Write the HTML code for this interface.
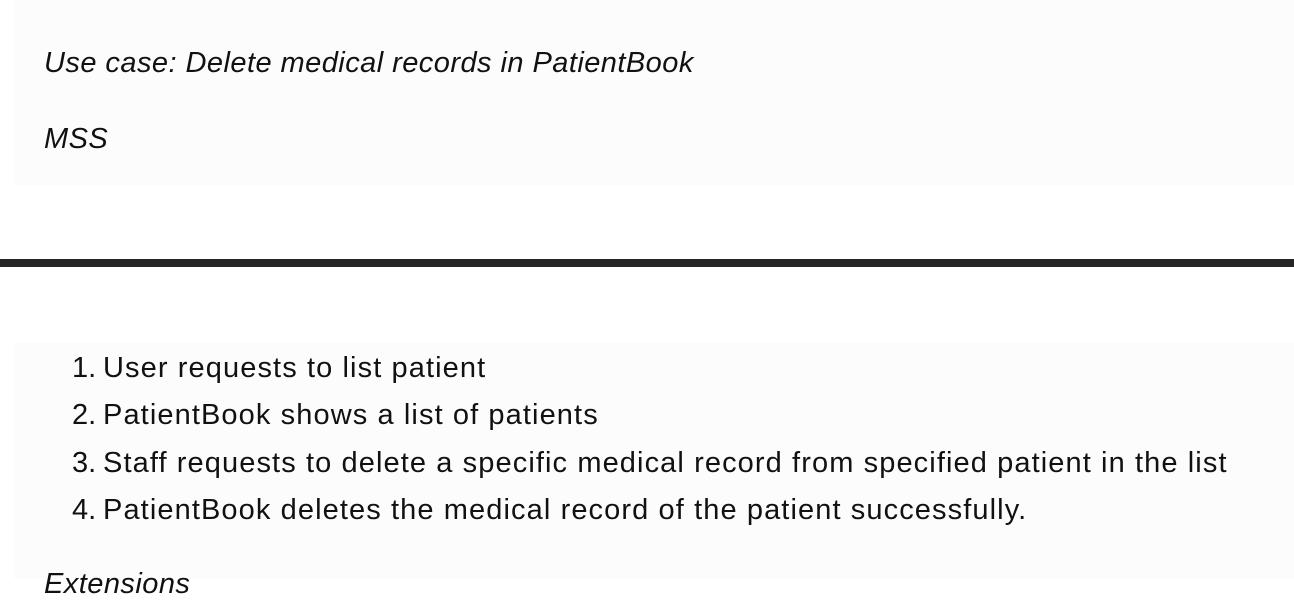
<!DOCTYPE html>
<html><head><style>
html,body{margin:0;padding:0;background:#fff;width:1294px;height:579px;overflow:hidden;font-family:"Liberation Sans",sans-serif;color:#111;}
.b1{position:absolute;left:14px;top:0;width:1280px;height:185px;background:#fcfcfc;}
.t{position:absolute;left:44px;font-style:italic;font-size:29px;white-space:nowrap;letter-spacing:0.45px;}
.bar{position:absolute;left:0;top:259px;width:1294px;height:8px;background:#262626;}
.b2{position:absolute;left:14px;top:343px;width:1280px;height:236px;background:#fcfcfc;}
.li{position:absolute;font-size:29px;white-space:nowrap;letter-spacing:1.1px;}
.n{position:absolute;left:72px;letter-spacing:0;}
.x{position:absolute;left:103px;}
</style></head><body>
<div class="b1"></div>
<div class="t" style="top:47px">Use case: Delete medical records in PatientBook</div>
<div class="t" style="top:123px">MSS</div>
<div class="bar"></div>
<div class="b2"></div>
<div class="li n" style="top:352px">1.</div><div class="li x" style="top:352px">User requests to list patient</div>
<div class="li n" style="top:399px">2.</div><div class="li x" style="top:399px">PatientBook shows a list of patients</div>
<div class="li n" style="top:447px">3.</div><div class="li x" style="top:447px">Staff requests to delete a specific medical record from specified patient in the list</div>
<div class="li n" style="top:494px">4.</div><div class="li x" style="top:494px">PatientBook deletes the medical record of the patient successfully.</div>
<div class="t" style="top:568px">Extensions</div>
</body></html>
